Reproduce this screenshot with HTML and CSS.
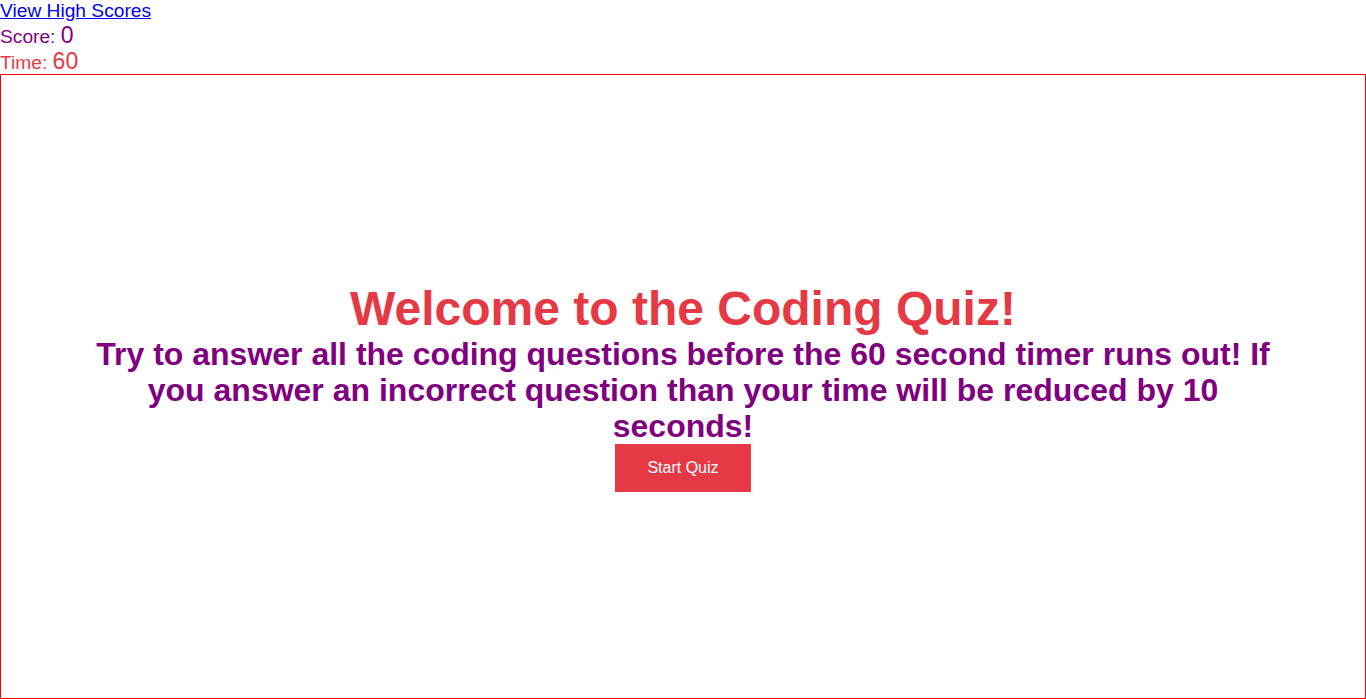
FILE: index.html
```html
<!DOCTYPE html>
<html>
<head>
<meta charset="utf-8">
<link rel="stylesheet" href="styles.css">
</head>
<body>
<header class="top">
  <a class="scores-link" href="#">View High Scores</a>
  <div class="score">Score: <span class="num">0</span></div>
  <div class="time">Time: <span class="num">60</span></div>
</header>
<main class="quiz">
  <h1 class="title">Welcome to the Coding Quiz!</h1>
  <h2 class="intro">Try to answer all the coding questions before the 60 second timer runs out! If you answer an incorrect question than your time will be reduced by 10 seconds!</h2>
  <button class="start">Start Quiz</button>
</main>
</body>
</html>
```
FILE: styles.css
```css
html, body {
  margin: 0;
  padding: 0;
}
body {
  font-family: "Liberation Sans", Arial, sans-serif;
  background: #fff;
}
.top {
  font-size: 19.2px;
  line-height: 22px;
}
.scores-link {
  display: block;
  color: #0000ee;
  text-decoration: underline;
}
.score,
.time {
  height: 26px;
  line-height: 30px;
}
.score {
  color: #800080;
}
.time {
  color: #e63946;
}
.num {
  font-size: 23px;
  line-height: 20px;
}
.quiz {
  box-sizing: border-box;
  height: 625px;
  border: 1px solid #ff0000;
  display: flex;
  flex-direction: column;
  align-items: center;
  justify-content: center;
  text-align: center;
  padding: 0 90px;
}
.title {
  margin: 0;
  font-size: 48px;
  line-height: 1.15;
  color: #e63946;
  font-weight: bold;
}
.intro {
  margin: 0;
  font-size: 32px;
  line-height: 36px;
  color: #800080;
  font-weight: bold;
}
.start {
  width: 136px;
  height: 48px;
  border: none;
  background: #e63946;
  color: #fff;
  font-family: "Liberation Sans", Arial, sans-serif;
  font-size: 16px;
  cursor: pointer;
}
```
